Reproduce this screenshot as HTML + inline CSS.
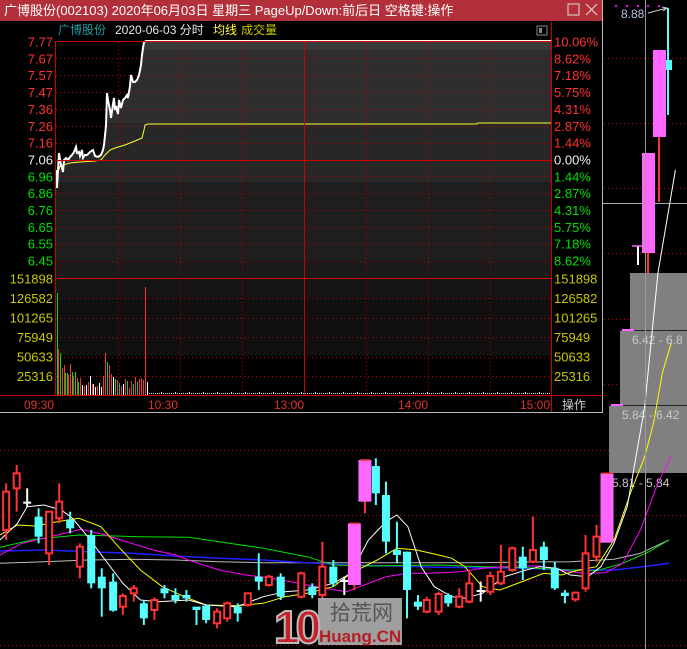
<!DOCTYPE html>
<html><head><meta charset="utf-8">
<style>
html,body{margin:0;padding:0;background:#000;width:687px;height:649px;overflow:hidden}
svg{display:block}
text{font-family:"Liberation Sans","Noto Sans CJK SC",sans-serif}
</style></head>
<body>
<svg id="s" width="687" height="649" viewBox="0 0 687 649" xmlns="http://www.w3.org/2000/svg">
<rect width="687" height="649" fill="#000"/>
<!-- right panel dotted lines -->
<g stroke="#c00000" stroke-dasharray="1,3" stroke-width="1">
<line x1="604" y1="58.5" x2="687" y2="58.5"/><line x1="604" y1="123.5" x2="687" y2="123.5"/>
<line x1="604" y1="188.5" x2="687" y2="188.5"/><line x1="604" y1="253.5" x2="687" y2="253.5"/>
<line x1="604" y1="319.5" x2="687" y2="319.5"/><line x1="604" y1="384.5" x2="687" y2="384.5"/>
<line x1="0" y1="450.5" x2="687" y2="450.5"/><line x1="0" y1="515.5" x2="687" y2="515.5"/>
<line x1="0" y1="580.5" x2="687" y2="580.5"/><line x1="0" y1="645.5" x2="687" y2="645.5"/>
</g>
<!-- gray boxes -->
<rect x="630" y="273" width="57" height="57" fill="#808080"/>
<rect x="620" y="330" width="67" height="75" fill="#808080"/>
<rect x="609" y="405" width="78" height="68" fill="#808080"/>
<line x1="620" y1="330.5" x2="687" y2="330.5" stroke="#222"/>
<line x1="609" y1="405.5" x2="687" y2="405.5" stroke="#222"/>
<line x1="622" y1="330" x2="634" y2="330" stroke="#ff66ff" stroke-width="2"/>
<line x1="611" y1="405" x2="623" y2="405" stroke="#ff66ff" stroke-width="2"/>
<text x="632" y="344" font-size="12" fill="#c8c8c8">6.42 - 6.8</text>
<text x="622" y="419" font-size="12" fill="#c8c8c8">5.84 - 6.42</text>
<text x="612" y="487" font-size="12" fill="#c8c8c8">5.81 - 5.84</text>
<line x1="603" y1="203.5" x2="687" y2="203.5" stroke="#aaa"/>
<g id="kb"></g>
<!-- right top candles -->
<line x1="668" y1="8" x2="668" y2="115" stroke="#55ffff" stroke-width="2"/>
<rect x="664" y="60" width="8" height="10" fill="#55ffff"/>
<rect x="653" y="50" width="13" height="87" fill="#ff66ff"/>
<line x1="659" y1="137" x2="659" y2="202" stroke="#ff3333" stroke-width="2"/>
<rect x="642" y="153" width="13" height="100" fill="#ff66ff"/>
<line x1="648" y1="253" x2="648" y2="273" stroke="#ff3333" stroke-width="2"/>
<line x1="638" y1="246" x2="638" y2="265" stroke="#fff" stroke-width="2"/>
<line x1="632" y1="246" x2="642" y2="246" stroke="#ff66ff" stroke-width="1.5"/>
<g fill="#ff00ff"><rect x="615" y="5" width="2" height="2"/><rect x="626" y="5" width="2" height="2"/><rect x="637" y="5" width="2" height="2"/><rect x="647" y="5" width="2" height="2"/><rect x="658" y="5" width="2" height="2"/></g>
<text x="621" y="18" font-size="12" fill="#b0c4de">8.88</text>
<path d="M648 13 L667 8 M662 7 L667 8 L663 11" stroke="#ccc" fill="none"/>
<line x1="645.5" y1="0" x2="645.5" y2="649" stroke="#999"/>
<!-- watermark -->
<g>
<rect x="318" y="598" width="84" height="47" fill="#bbb" opacity="0.85"/>
<text x="274" y="643" font-size="46" font-weight="bold" fill="#c8202a" stroke="#bbb" stroke-width="2" letter-spacing="-4">10</text>
<text x="330" y="620" font-size="21" fill="#555">拾荒网</text>
<text x="319" y="642" font-size="17" font-weight="bold" fill="#b81c24">Huang.CN</text>
</g>
<!-- window -->
<rect x="0" y="0" width="603" height="413" fill="#000"/>
<rect x="0" y="0" width="603" height="21" fill="#b3303a"/>
<text x="4" y="15" font-size="13" fill="#fff">广博股份(002103) 2020年06月03日 星期三 PageUp/Down:前后日 空格键:操作</text>
<rect x="568" y="4" width="11" height="11" fill="none" stroke="#ddd"/>
<path d="M586 4 L597 15 M597 4 L586 15" stroke="#ddd"/>
<line x1="602.5" y1="0" x2="602.5" y2="413" stroke="#bbb"/>
<line x1="0" y1="412.5" x2="603" y2="412.5" stroke="#bbb"/>
<text x="58" y="34" font-size="12" fill="#1e9a9a">广博股份</text>
<text x="115" y="34" font-size="12" fill="#e8e8e8">2020-06-03 分时</text>
<text x="213" y="34" font-size="12" fill="#ffff33">均线</text>
<text x="241" y="34" font-size="12" fill="#c8c800">成交量</text>
<rect x="537" y="26" width="10" height="9" fill="none" stroke="#888"/><rect x="539" y="28" width="3" height="5" fill="#888"/>
<!-- price area fill -->
<clipPath id="pc"><path id="pf" d=""/></clipPath>
<g clip-path="url(#pc)">
<rect x="55" y="41" width="496" height="9" fill="#3a3a3a"/>
<rect x="55" y="50" width="496" height="73" fill="#2e2e2e"/>
<rect x="55" y="123" width="496" height="59" fill="#272727"/>
<rect x="55" y="182" width="496" height="78" fill="#1e1e1e"/>
</g>
<rect x="56" y="260" width="495" height="18" fill="#1a1a1a"/>
<rect x="56" y="278" width="495" height="19" fill="#151515"/>
<rect x="56" y="297" width="495" height="59" fill="#101010"/>
<g id="grid"></g>
<g id="lab"></g>
<g id="vol"></g>
<polyline id="avg" fill="none" stroke="#ffff33" stroke-width="1" points=""/>
<polyline id="pl" fill="none" stroke="#fff" stroke-width="2" points=""/>
<line x1="55" y1="160.5" x2="551" y2="160.5" stroke="#d00000"/>
<line x1="55" y1="278.5" x2="551" y2="278.5" stroke="#d00000"/>
<line x1="0" y1="395.5" x2="603" y2="395.5" stroke="#d00000"/>
<line x1="55.5" y1="41" x2="55.5" y2="395" stroke="#d00000"/>
<line x1="551.5" y1="22" x2="551.5" y2="412" stroke="#d00000"/>
<line x1="304.5" y1="41" x2="304.5" y2="395" stroke="#d00000"/>
<line x1="55" y1="41.5" x2="551" y2="41.5" stroke="#d00000"/>
<g font-size="12" fill="#e03030">
<text x="24" y="409">09:30</text><text x="148" y="409">10:30</text><text x="274" y="409">13:00</text><text x="398" y="409">14:00</text><text x="520" y="409">15:00</text></g>
<text x="562" y="409" font-size="12" fill="#ccc">操作</text>
</svg>
<script>
var NS="http://www.w3.org/2000/svg";
function el(p,t,a,txt){var e=document.createElementNS(NS,t);for(var k in a)e.setAttribute(k,a[k]);if(txt!=null)e.textContent=txt;document.getElementById(p).appendChild(e);return e;}
// grid
var pr=["7.77","7.67","7.57","7.47","7.36","7.26","7.16","7.06","6.96","6.86","6.76","6.65","6.55","6.45"];
var pc=["10.06%","8.62%","7.18%","5.75%","4.31%","2.87%","1.44%","0.00%","1.44%","2.87%","4.31%","5.75%","7.18%","8.62%"];
for(var i=0;i<14;i++){var y=41.5+i*16.85;
 if(i>0&&i!=7)el("grid","line",{x1:56,x2:551,y1:Math.round(y)+.5,y2:Math.round(y)+.5,stroke:"#c00000","stroke-dasharray":"1,3"});
 var c=i<7?"#ff3232":(i==7?"#f0f0f0":"#00e000");
 el("lab","text",{x:53,y:y+5,"font-size":13,fill:c,"text-anchor":"end"},pr[i]);
 el("lab","text",{x:554,y:y+5,"font-size":13,fill:c},pc[i]);}
var vl=["151898","126582","101265","75949","50633","25316"];
for(var i=0;i<6;i++){var y=278.5+i*19.5;
 if(i>0)el("grid","line",{x1:56,x2:551,y1:Math.round(y)+.5,y2:Math.round(y)+.5,stroke:"#c00000","stroke-dasharray":"1,3"});
 el("lab","text",{x:53,y:y+5,"font-size":13,fill:"#c8c800","text-anchor":"end"},vl[i]);
 el("lab","text",{x:554,y:y+5,"font-size":13,fill:"#c8c800"},vl[i]);}
[118,180,242,366,428,490].forEach(function(x){el("grid","line",{x1:x+.5,x2:x+.5,y1:42,y2:395,stroke:"#c00000","stroke-dasharray":"1,3"});});
// price line
var P=[[56,170],[57,188],[59,153],[61,165],[62,168],[63,172],[64,160],[66,158],[68,160],[70,157],[72,155],[74,152],[76,147],[77,153],[79,152],[80,156],[82,150],[83,158],[85,155],[87,155],[90,152],[93,150],[95,156],[98,157],[101,155],[103,150],[104,145],[106,126],[107,93],[108,100],[110,110],[111,118],[113,104],[114,98],[115,110],[116,106],[118,114],[119,100],[121,108],[123,100],[125,98],[127,95],[128,98],[130,86],[131,75],[133,82],[135,82],[137,80],[139,75],[141,65],[142,55],[143,48],[144,42],[146,41],[551,41]];
document.getElementById("pl").setAttribute("points",P.map(function(p){return p.join(",")}).join(" "));
document.getElementById("pf").setAttribute("d","M"+P.map(function(p){return p.join(",")}).join(" L")+" L551,260 L56,260 Z");
var A=[[57,176],[60,166],[70,163],[80,162],[95,161],[101,160],[105,155],[110,150],[115,148],[125,145],[135,141],[142,138],[144,130],[145,125],[148,124],[300,124],[477,124],[478,123],[551,123]];
document.getElementById("avg").setAttribute("points",A.map(function(p){return p.join(",")}).join(" "));
// volume
var V=[[57,293,"g"],[58,349,"r"],[60,353,"g"],[62,368,"r"],[64,365,"r"],[65,373,"g"],[67,373,"g"],[68,375,"r"],[70,364,"r"],[72,372,"g"],[73,376,"r"],[75,372,"g"],[77,378,"r"],[78,382,"g"],[80,378,"r"],[82,385,"w"],[84,386,"r"],[86,385,"w"],[88,382,"r"],[90,376,"w"],[92,384,"r"],[93,384,"w"],[95,387,"w"],[97,386,"r"],[99,383,"w"],[101,387,"w"],[103,376,"r"],[105,353,"r"],[107,362,"g"],[109,365,"r"],[111,374,"r"],[113,377,"w"],[115,379,"g"],[117,380,"r"],[119,383,"g"],[121,386,"r"],[123,384,"w"],[125,379,"r"],[127,381,"g"],[129,388,"r"],[131,381,"r"],[133,384,"g"],[135,377,"r"],[137,382,"g"],[139,379,"r"],[141,378,"r"],[143,380,"r"],[145,287,"r"],[147,382,"w"]];
var cm={g:"#00e000",r:"#ff3030",w:"#fff"};
V.forEach(function(v){el("vol","rect",{x:v[0],y:v[1],width:1,height:395-v[1],fill:cm[v[2]]});});
for(var x=149;x<550;x+=2)el("vol","rect",{x:x,y:393+(x%7==0?-1:0),width:1,height:x%7==0?2:1,fill:"#ddd"});
// bottom K chart
function Y(z){return 440+z/3;}function X(z){return z/2.28;}
var K=[[14,"r",155,270,130,300],[38,"r",100,145,75,215],[62,"w",188,192,145,200],[88,"c",230,290,205,310],[112,"r",215,340,215,375],[135,"r",185,235,130,250],[160,"c",240,265,215,280],[182,"r",320,380,310,415],[208,"c",285,430,270,445],[232,"c",410,445,385,530],[258,"c",425,512,400,515],[280,"r",468,500,460,525],[305,"r",445,460,435,485],[328,"c",490,535,480,555],[352,"r",480,510,472,540],[375,"c",445,460,435,475],[400,"c",465,480,445,490],[425,"c",465,475,450,485],[448,"c",500,510,500,555],[470,"c",497,540,495,550],[495,"r",515,550,505,565],[518,"r",490,535,485,545],[542,"c",500,520,490,545],[565,"r",460,495,460,500],[590,"c",410,425,340,450],[613,"r",410,435,405,440],[640,"c",410,470,400,480],[687,"r",400,470,395,475],[712,"c",440,465,430,475],[735,"r",380,465,305,475],[760,"c",380,430,360,440],[785,"w",423,427,410,465],[808,"m",250,435,250,450],[832,"m",60,185,60,220],[857,"c",78,160,55,195],[880,"c",165,305,125,340],[905,"c",330,345,245,370],[928,"c",335,450,335,535],[953,"c",485,500,465,510],[973,"r",480,515,470,520],[1000,"r",462,515,455,525],[1022,"c",465,490,460,500],[1047,"r",470,500,445,505],[1070,"r",430,485,390,490],[1096,"w",453,457,425,485],[1118,"r",408,455,395,465],[1142,"r",395,430,315,435],[1168,"r",325,390,320,395],[1192,"c",350,385,320,420],[1215,"r",330,365,230,370],[1240,"c",320,360,305,390],[1265,"c",385,445,365,450],[1288,"c",458,468,450,490],[1312,"r",458,478,455,485],[1335,"r",340,445,285,455],[1360,"r",290,350,255,365],[1384,"m",100,308,100,308]];
// MA lines first
var L={"#ffffff":[[0,300],[40,250],[62,200],[100,195],[140,210],[165,235],[200,290],[240,360],[280,430],[320,480],[360,485],[430,480],[470,495],[540,500],[600,470],[650,455],[700,450],[760,430],[800,400],[840,300],[880,245],[905,225],[930,260],[960,380],[990,440],[1030,470],[1060,475],[1100,460],[1150,410],[1200,390],[1230,380],[1270,385],[1300,405],[1340,410],[1370,380],[1400,310],[1430,200],[1450,50],[1470,-100],[1500,-500],[1540,-810]],
"#ffff00":[[0,285],[40,255],[80,258],[130,245],[180,235],[230,260],[270,320],[320,390],[370,440],[420,470],[470,495],[540,497],[600,490],[650,470],[700,460],[760,440],[800,400],[860,360],[905,325],[950,330],[1000,345],[1030,355],[1060,380],[1100,440],[1140,450],[1200,420],[1240,400],[1280,405],[1320,390],[1360,380],[1400,300],[1440,150],[1470,50],[1490,-50],[1510,-200],[1530,-290]],
"#ff00ff":[[0,345],[50,310],[100,295],[140,282],[185,268],[240,285],[300,310],[350,330],[400,345],[440,365],[500,390],[560,405],[620,415],[680,430],[740,445],[790,455],[840,430],[880,410],[930,400],[980,400],[1050,395],[1100,385],[1170,378],[1230,378],[1280,390],[1330,400],[1380,398],[1420,370],[1460,270],[1500,130],[1530,50]],
"#00e000":[[0,322],[80,298],[180,285],[320,290],[430,292],[500,305],[600,325],[700,350],[760,375],[850,378],[1000,375],[1100,380],[1200,383],[1300,390],[1360,392],[1420,370],[1480,335],[1525,300]],
"#2020ff":[[0,333],[100,330],[200,335],[300,340],[400,348],[500,355],[600,360],[700,368],[800,375],[900,378],[1000,382],[1100,383],[1200,385],[1300,390],[1400,390],[1480,378],[1525,370]],
"#bbbbbb":[[0,370],[100,365],[200,360],[300,358],[400,360],[500,365],[600,368],[700,368],[800,368],[900,368],[1000,368],[1100,368],[1200,366],[1300,365],[1400,358],[1460,340],[1525,300]]};
var order=["#bbbbbb","#2020ff","#00e000","#ff00ff","#ffff00","#ffffff"];
order.forEach(function(c){el("kb","polyline",{points:L[c].map(function(p){return X(p[0]).toFixed(1)+","+Y(p[1]).toFixed(1)}).join(" "),fill:"none",stroke:c,"stroke-width":c=="#2020ff"?1.5:1});});
K.forEach(function(k){var x=X(k[0]);var t=k[1];var bt=Y(k[2]),bb=Y(k[3]),wt=Y(k[4]),wb=Y(k[5]);
 if(t=="r"){el("kb","line",{x1:x,x2:x,y1:wt,y2:bt,stroke:"#ff3333","stroke-width":2});el("kb","line",{x1:x,x2:x,y1:bb,y2:wb,stroke:"#ff3333","stroke-width":2});
  el("kb","rect",{x:x-3,y:bt,width:6,height:Math.max(bb-bt,1),fill:"#000",stroke:"#ff3333","stroke-width":2});}
 else if(t=="c"){el("kb","line",{x1:x,x2:x,y1:wt,y2:wb,stroke:"#55ffff","stroke-width":2});el("kb","rect",{x:x-4,y:bt,width:8,height:Math.max(bb-bt,2),fill:"#55ffff"});}
 else if(t=="w"){el("kb","line",{x1:x,x2:x,y1:wt,y2:wb,stroke:"#fff","stroke-width":2});el("kb","line",{x1:x-4,x2:x+4,y1:bt,y2:bt,stroke:"#fff","stroke-width":2});}
 else {el("kb","line",{x1:x,x2:x,y1:wt,y2:wb,stroke:"#ff3333","stroke-width":2});el("kb","rect",{x:x-6.5,y:bt,width:13,height:bb-bt,fill:"#ff66ff"});el("kb","line",{x1:x-5,x2:x+5,y1:bt,y2:bt,stroke:"#ff3333","stroke-width":1.5});}
});
</script>
</body></html>
